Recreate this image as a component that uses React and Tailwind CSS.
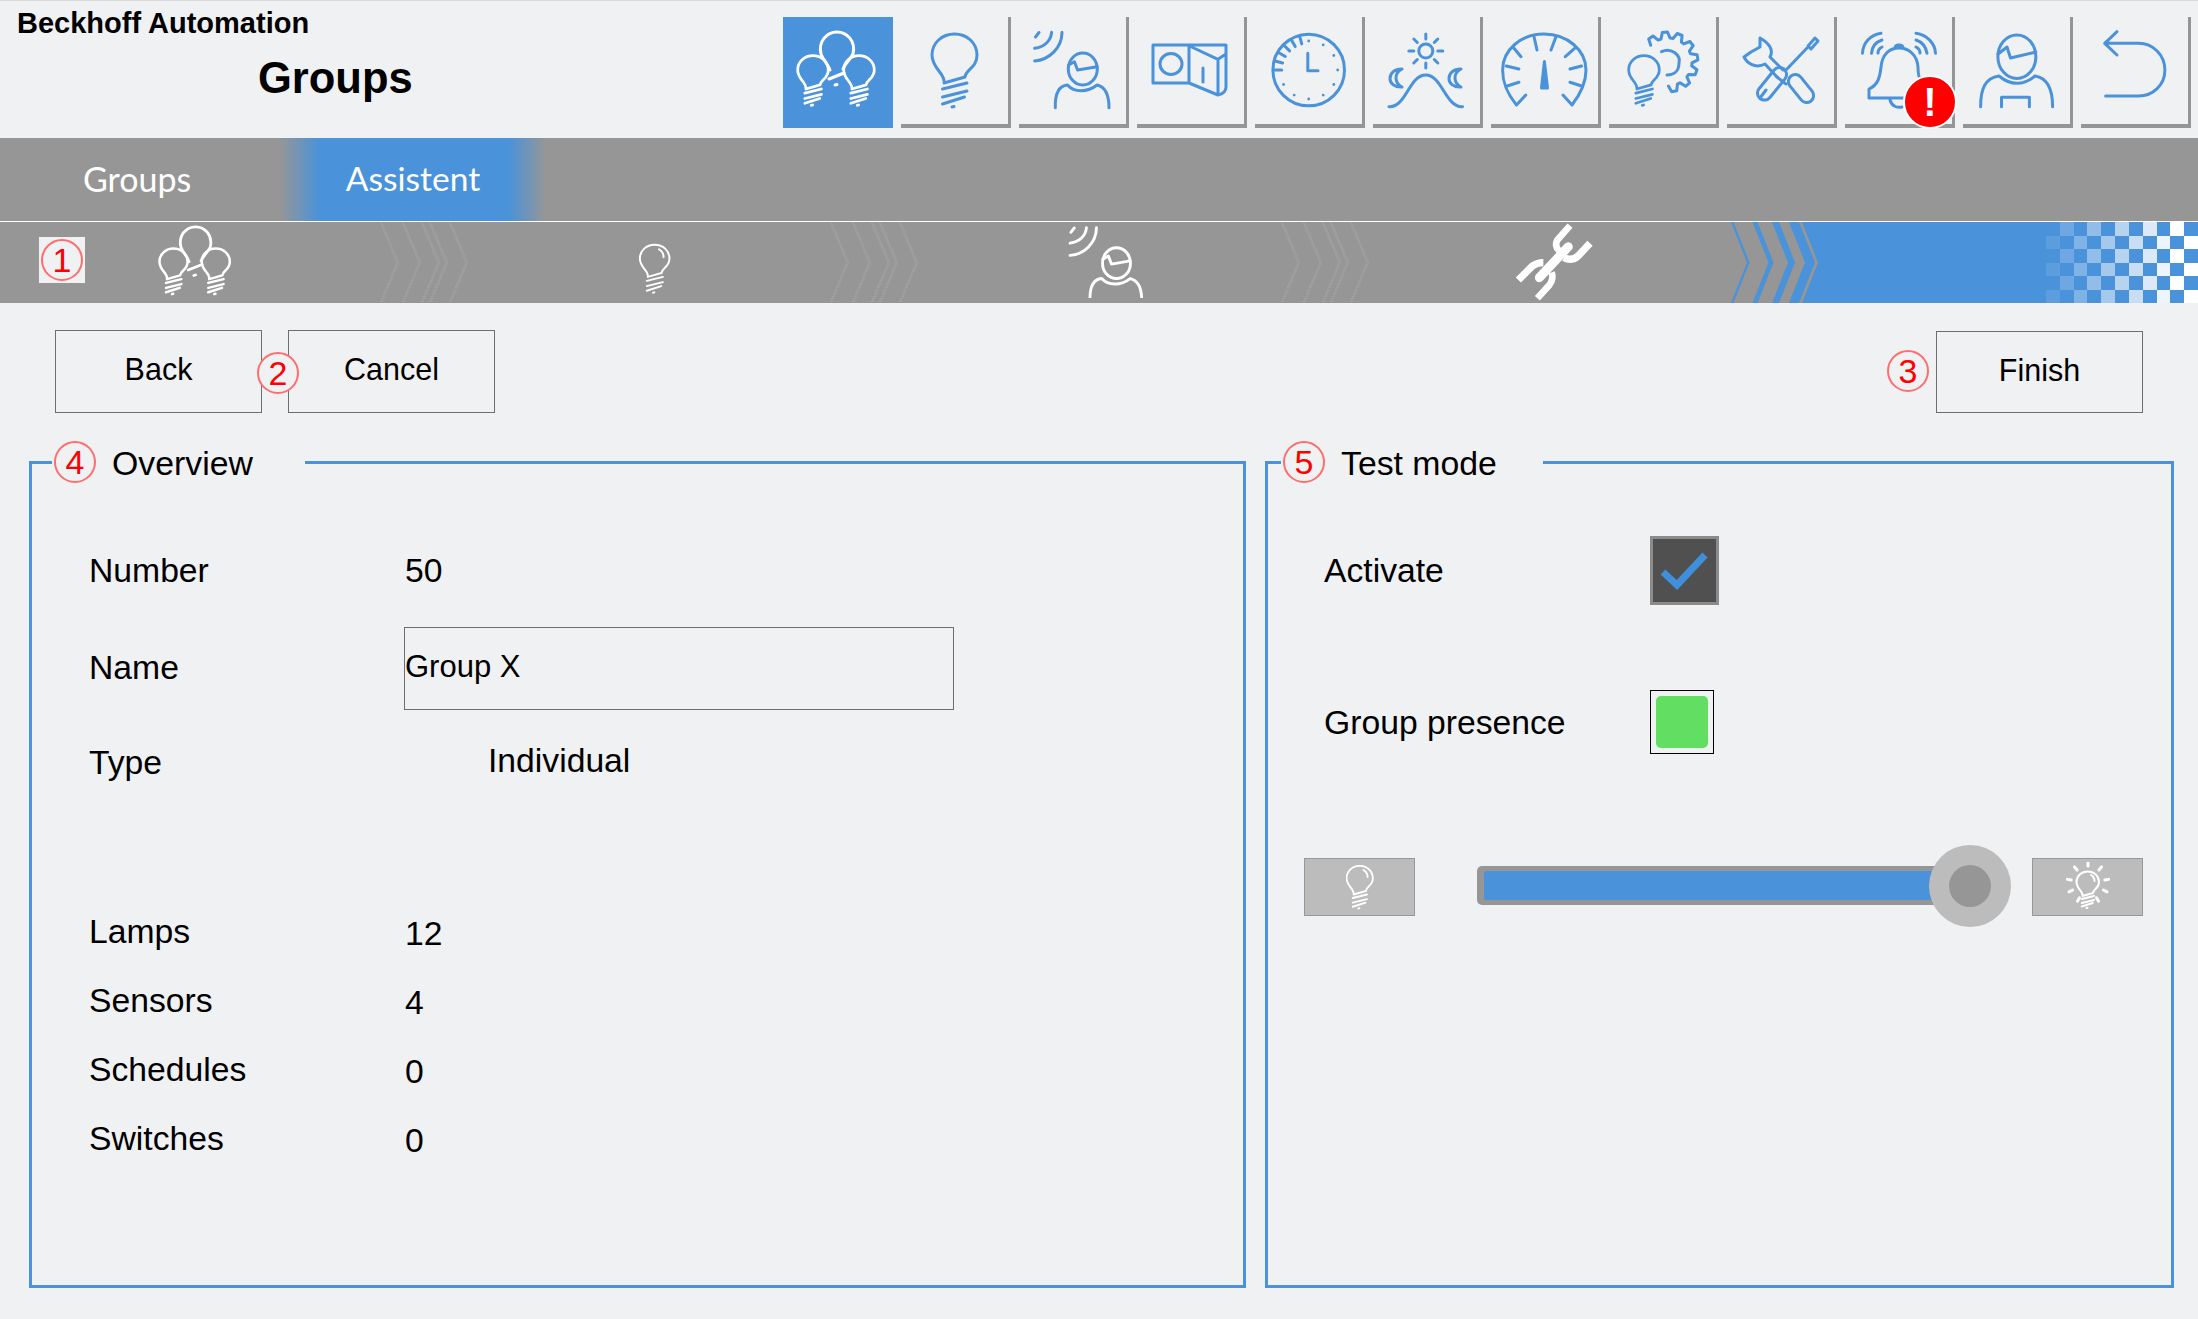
import React from "react";

const polar = (cx, cy, deg, rx, ry = rx) => {
  const a = (deg * Math.PI) / 180;
  return [cx + Math.sin(a) * rx, cy - Math.cos(a) * ry];
};

// ── Bulb drawn in a 48x76 box, scaled by the caller ───────
const Bulb = ({ glare = false }) => (
  <>
    <path d="M13 48C13 40 1 35 1 22 1 10 11 1 23.5 1 36 1 46 10 46 22 46 35 35 36 34 44L13 50" />
    <path d="M11.5 56 36 50M11.5 64 36 58M11.5 71 33.5 64M21 74 23 73.5" />
    {glare && <path d="M30 8C35 11 37 15 37 20" />}
  </>
);

const ToolIcon = ({ children }) => (
  <svg
    width="110"
    height="111"
    viewBox="0 0 110 111"
    fill="none"
    stroke="currentColor"
    strokeWidth="3"
    strokeLinecap="round"
    strokeLinejoin="round"
    className="shrink-0 overflow-visible"
  >
    {children}
  </svg>
);

const GroupBulbs = () => (
  <>
    <path d="M38 37C35 24 44 15 54 15 64 15 73 24 70 37M38 37C40 43 45 47 47 53M70 37C67 43 62 47 60 52M46 62 61 56M52 68 54 67.500" />
    <g transform="translate(14 38) scale(.68)" strokeWidth="4">
      <Bulb />
    </g>
    <g transform="translate(60 38) scale(.68)" strokeWidth="4">
      <Bulb />
    </g>
  </>
);

const SensorPerson = () => (
  <>
    <path d="M20 15.500 16.500 20M32.600 15.300C32 23 26 30 15.600 31.300M43 15.300C43 31 30 43 15.600 44" />
    <ellipse cx="63.800" cy="52" rx="14.500" ry="16" />
    <path d="M49.600 48 55.400 44.700 58.600 53 78 49.700" />
    <path d="M36.300 90.700C36 80 38 69 48.400 68 52 72 57 73.700 62 73.700 68 73.700 73 72 78 68 87 70 90 80 90 90.700" />
  </>
);

const Projector = () => (
  <>
    <path d="M16 28H89V70C89 74 86 77 81 78L52 66H16ZM52 28V66M54.600 30 81 42.300 89 37M81 42.300V78M66 51V65" />
    <ellipse cx="34" cy="47" rx="11" ry="10.500" />
  </>
);

const Clock = () => (
  <>
    <circle cx="53.700" cy="53" r="35.800" />
    <path d="M52.800 36.300V53.700H63" />
    {[0, 30, 60, 90, 120, 150, 180, 210, 240].map((d) => {
      const [x, y] = polar(53.7, 53, d, 29);
      return <circle key={d} cx={x} cy={y} r="1.400" fill="currentColor" stroke="none" />;
    })}
    {[270, 285, 300, 315, 330, 345].map((d) => {
      const [x1, y1] = polar(53.7, 53, d, 27);
      const [x2, y2] = polar(53.7, 53, d, 34);
      return <line key={d} x1={x1} y1={y1} x2={x2} y2={y2} />;
    })}
  </>
);

const Moon = ({ cx, cy }) => (
  <path
    d={`M${cx + 6} ${cy - 9}C${cx - 10} ${cy - 9} ${cx - 10} ${cy + 10} ${cx + 6} ${cy + 9}C${cx - 2} ${cy + 5} ${cx - 2} ${cy - 5} ${cx + 6} ${cy - 9}Z`}
  />
);

const DayCurve = () => (
  <>
    <ellipse cx="52.800" cy="34" rx="7" ry="7" />
    {[0, 45, 90, 135, 180, 225, 270, 315].map((d) => {
      const [x1, y1] = polar(52.8, 34, d, 12);
      const [x2, y2] = polar(52.8, 34, d, 17);
      return <line key={d} x1={x1} y1={y1} x2={x2} y2={y2} />;
    })}
    <path d="M16 89.700C33 91 36 58 52.800 58 69 58 73 91 89.500 89.700" />
    <Moon cx={23} cy={61} />
    <Moon cx={82} cy={61} />
  </>
);

const Gauge = () => (
  <>
    <path d="M25.500 88C15 75 11.600 65 11.600 53 11.600 33 30 17 53 17 76 17 95 33 95 53 95 65 91 75 81 88L72 78M25.500 88 34.800 78" />
    <path d="M43 19.700 46 33M65 19.700 60 33M22 30 30 39.700M74.300 39.700 83.600 31.300M15.300 49 27.900 52M79 52 90.500 49M16.200 69 27.900 65.300M79 65.300 90.500 69" />
    <path d="M53.400 44.600 50.500 71H56.500Z" fill="currentColor" />
  </>
);

const gearPath = () => {
  const pts = [];
  for (let k = 0; k < 8; k++) {
    const a = -46 + k * 29;
    pts.push(polar(59, 45, a, 24), polar(59, 45, a + 6, 30), polar(59, 45, a + 16, 30), polar(59, 45, a + 22, 24));
  }
  return "M" + pts.map((p) => p.map((n) => n.toFixed(1)).join(" ")).join("L");
};

const GearBulb = () => (
  <>
    <path d={gearPath()} />
    <path d="M52.500 34.700C62 30 72 38 70 46 70 54 65 58 58 58" />
    <g transform="translate(19 38) scale(.68)" strokeWidth="4">
      <Bulb />
    </g>
  </>
);

const Tools = () => (
  <>
    <path d="M33 21V30L24 35 17 40C20 46 28 52 38 47L50 60M33 21C42 26 47 33 43 40L56 53" />
    <rect x="-7" y="0" width="14" height="32" rx="7" transform="translate(64 59) rotate(-38.700)" />
    <path d="M80 31 60 52M81 29 88 21 91 24 84 32Z" />
    <rect x="-7" y="0" width="14" height="38" rx="7" transform="translate(57 52) rotate(39)" />
    <path d="M50 60 59 67M33 81 39 73" />
  </>
);

const Bell = () => (
  <>
    <path d="M24 81V72C33 68 35 60 36 50 37 38 44 31 54 31 64 31 72 38 73 50 73 60 75 68 84 72V81ZM50 31C50 27 58 27 58 31M45 83C47 90 53 91 57 90" />
    <path d="M36 16.300C25 18 18 26 17.500 36.300M37 23C31 25 27 30 26.500 36.300M37 30C35 31 33 33 33 36M71 16.300C82 18 90 26 90.500 36.300M71 23C77 25 81 30 82 36.300M71 30C73 31 75 33 75 36" />
  </>
);

const Operator = () => (
  <>
    <ellipse cx="53.900" cy="39.700" rx="19" ry="21.700" />
    <path d="M35 37 44 30 47.500 41 72.800 35" />
    <path d="M17.600 89.700C17.600 72 22 61 36 59 42 64 47 66.300 54 66.300 61 66.300 66 64 72 59 85 61 89.600 72 89.600 89.700M38.500 89.700V80.300H66.400V89.700" />
  </>
);

const BackArrow = () => (
  <path d="M36 14.700 23.700 26.300 36 38M23.700 26.300H57.500C72 26.300 83.900 38 83.900 53 83.900 68 72 79 57.500 79H24.600" />
);

// ── Toolbar button ────────────────────────────────────────
const tools = [GroupBulbs, Bulb1, SensorPerson, Projector, Clock, DayCurve, Gauge, GearBulb, Tools, Bell, Operator, BackArrow];

function Bulb1() {
  return (
    <g transform="translate(30 16)">
      <Bulb />
    </g>
  );
}

const Marker = ({ n, className = "" }) => (
  <div
    className={`flex h-[42px] w-[42px] shrink-0 items-center justify-center rounded-full border-2 border-[#ff6e6e] bg-[#f0f1f3] text-[34px] leading-none text-[#ff0000] ${className}`}
  >
    {n}
  </div>
);

// ── Step strip decorations ────────────────────────────────
const Chevrons = () => (
  <svg width="90" height="81" viewBox="0 0 90 81" fill="none" stroke="#b4b4b4" strokeWidth=".6" strokeDasharray="1.5 1" className="shrink-0">
    {[0, 22, 41, 49, 69].map((x) => (
      <g key={x}>
        <path d={`M${x} 0 ${x + 17} 40.500 ${x} 81`} />
        <path d={`M${x + 1.5} 0 ${x + 18.5} 40.500 ${x + 1.5} 81`} />
      </g>
    ))}
  </svg>
);

const BlueChevrons = () => {
  const band = (a, b) => `${a},0 ${b},0 ${b + 16},40.500 ${b},81 ${a},81 ${a + 16},40.500`;
  return (
    <svg width="89" height="81" viewBox="0 0 89 81" fill="#4a92da" className="shrink-0">
      <polygon points={band(0, 2.5)} />
      <polygon points={band(21.5, 26.5)} />
      <polygon points={band(41, 48)} />
      <polygon points={band(58, 68)} />
      <polygon points="71,0 89,0 89,81 71,81 87,40.500" />
    </svg>
  );
};

const Checker = () => (
  <div className="grid h-[81px] w-[152px] shrink-0 grid-cols-11 grid-rows-6 bg-[#4a92da]">
    {Array.from({ length: 66 }).map((_, i) => {
      const col = i % 11;
      const row = Math.floor(i / 11);
      const lit = row % 2 === 0 ? col % 2 === 1 : col % 2 === 0;
      return <div key={i} style={{ background: lit ? `rgba(255,255,255,${Math.min(1, (col + 1) / 10)})` : "transparent" }} />;
    })}
  </div>
);

const BrokenLink = () => (
  <svg width="110" height="81" viewBox="0 21 330 243" fill="none" stroke="#fff" className="shrink-0">
    <path d="M210 32 172 75Q162 92 178 108" strokeWidth="20" />
    <path d="M270 85 235 122Q215 140 192 128" strokeWidth="22" />
    <path d="M55 195 95 155Q110 143 130 143" strokeWidth="22" />
    <path d="M112 250 148 210Q162 192 155 172" strokeWidth="20" />
    <path d="M118 188 205 95" strokeWidth="27" strokeLinecap="round" />
  </svg>
);

// ── Test mode slider ──────────────────────────────────────
const SliderButton = ({ children }) => (
  <div className="flex h-[58px] w-[111px] shrink-0 items-center justify-center border border-[#989898] bg-[#bcbcbc]">
    {children}
  </div>
);

const rays = [-150, -115, -80, -40, 0, 40, 80, 115, 150];

const Field = ({ label, value }) => (
  <div className="flex h-[69px] items-center">
    <div className="w-[316px]">{label}</div>
    <div className="pt-[4px]">{value}</div>
  </div>
);

export default function App() {
  return (
    <div className="h-[1319px] w-[2198px] overflow-hidden border-t border-[#d9dadc] bg-[#f0f1f3] font-['Liberation_Sans',Arial,sans-serif] text-black">
      {/* Header */}
      <div className="flex h-[137px]">
        <div className="w-[783px] shrink-0 pl-[17px]">
          <div className="mt-[5px] text-[29px] leading-[34px] font-bold">Beckhoff Automation</div>
          <div className="mt-[13px] pl-[241px] text-[43.5px] leading-[50px] font-bold">Groups</div>
        </div>
        <div className="flex gap-2 pt-4 text-[#4a92da]">
          {tools.map((Icon, i) => (
            <div
              key={i}
              className={
                i === 0
                  ? "h-[111px] w-[110px] bg-[#4a92da] text-white"
                  : "relative h-[111px] w-[110px] border-r-[3px] border-b-4 border-[#959595]"
              }
            >
              <ToolIcon>
                <Icon />
              </ToolIcon>
              {i === 9 && (
                <div className="absolute top-[58px] left-[58px] z-10 flex h-[54px] w-[54px] items-center justify-center rounded-full border-2 border-white bg-[#ff0000] text-[40px] leading-none font-bold text-white">
                  !
                </div>
              )}
            </div>
          ))}
        </div>
      </div>

      {/* Tabs */}
      <div className="flex h-[83px] items-stretch bg-[#969696] pb-[3px] font-['Lato',sans-serif] text-white">
        <div className="flex w-[280px] items-center pl-[83px] text-[34px]">Groups</div>
        <div className="-mb-[3px] flex w-[266px] items-center justify-center bg-[linear-gradient(90deg,#969696_0%,#4a92da_15%,#4a92da_86%,#969696_100%)] pb-[3px] text-[33.5px]">
          Assistent
        </div>
      </div>

      {/* Wizard steps */}
      <div className="flex h-[82px] items-stretch border-t border-white bg-[#969696] text-white">
        <div className="flex w-[380px] items-center pl-[39px]">
          <div className="mb-[5px] flex h-[46px] w-[46px] items-center justify-center bg-[#f0f1f3]">
            <Marker n="1" />
          </div>
          <svg width="101" height="102" viewBox="0 0 110 111" fill="none" stroke="#fff" strokeWidth="3" strokeLinecap="round" strokeLinejoin="round" className="mt-[3px] ml-[61px] shrink-0 overflow-visible">
            <GroupBulbs />
          </svg>
        </div>
        <Chevrons />
        <div className="flex w-[360px] items-center pl-[169px]">
          <svg width="32" height="50" viewBox="0 0 48 76" fill="none" stroke="#fff" strokeWidth="3" strokeLinecap="round" className="mt-[12px] overflow-visible">
            <Bulb glare />
          </svg>
        </div>
        <Chevrons />
        <div className="flex h-[76px] w-[361px] items-center overflow-hidden pl-[135px]">
          <svg width="106" height="107" viewBox="0 0 110 111" fill="none" stroke="#fff" strokeWidth="3" strokeLinecap="round" strokeLinejoin="round" className="mt-[12px] shrink-0">
            <SensorPerson />
          </svg>
        </div>
        <Chevrons />
        <div className="flex w-[360px] items-center pl-[129px]">
          <BrokenLink />
        </div>
        <BlueChevrons />
        <div className="flex-1 bg-[#4a92da]" />
        <Checker />
      </div>

      {/* Wizard buttons */}
      <div className="flex items-start justify-between pt-[27px] pr-[55px] pl-[55px] text-[30.5px]">
        <div className="relative flex gap-[26px]">
          <button className="h-[83px] w-[207px] border border-[#6e6e6e] pb-[3px]">Back</button>
          <button className="h-[83px] w-[207px] border border-[#6e6e6e] pb-[3px]">Cancel</button>
          <Marker n="2" className="absolute top-[22px] left-[202px]" />
        </div>
        <div className="flex items-center gap-[7px] pt-px">
          <Marker n="3" className="mb-[2px]" />
          <button className="h-[82px] w-[207px] border border-[#6e6e6e] pb-[3px]">Finish</button>
        </div>
      </div>

      <div className="flex gap-[19px] pt-[48px] pl-[29px] text-[33.7px]">
        {/* Overview */}
        <div className="relative h-[827px] w-[1217px] border-[3px] border-[#4a92da] pt-[76px] pl-[57px]">
          <div className="absolute -top-[23px] left-[20px] flex h-[42px] w-[253px] items-center gap-[16px] bg-[#f0f1f3] pl-[2px]">
            <Marker n="4" />
            <span className="pt-[2px] text-[33.8px]">Overview</span>
          </div>

          <div className="flex h-[60px] items-center">
            <div className="w-[316px]">Number</div>
            <div>50</div>
          </div>
          <div className="mt-[27px] flex h-[83px] items-center">
            <div className="w-[315px] pb-[2px]">Name</div>
            <input
              readOnly
              defaultValue="Group X"
              className="h-[83px] w-[550px] border border-[#6e6e6e] bg-transparent pb-[3px] text-[31px] outline-none"
            />
          </div>
          <div className="mt-[22px] flex h-[60px] items-center">
            <div className="w-[399px]">Type</div>
            <div className="pb-1">Individual</div>
          </div>
          <div className="mt-[105px]">
            <Field label="Lamps" value="12" />
            <Field label="Sensors" value="4" />
            <Field label="Schedules" value="0" />
            <Field label="Switches" value="0" />
          </div>
        </div>

        {/* Test mode */}
        <div className="relative h-[827px] w-[909px] border-[3px] border-[#4a92da] pt-[72px]">
          <div className="absolute -top-[23px] left-[13px] flex h-[42px] w-[262px] items-center gap-[16px] bg-[#f0f1f3] pl-[2px]">
            <Marker n="5" />
            <span className="pt-[2px] text-[33.8px]">Test mode</span>
          </div>

          <div className="flex h-[69px] items-center pl-[56px]">
            <div className="w-[326px]">Activate</div>
            <div className="h-[69px] w-[69px] border-[3px] border-[#8b8b8b] bg-[#505050]">
              <svg width="63" height="63" viewBox="3 3 63 63" fill="none" stroke="#3f8fdb" strokeWidth="7">
                <path d="M13 36 27 49 55 19" />
              </svg>
            </div>
          </div>

          <div className="mt-[85px] flex h-[64px] items-center pl-[56px]">
            <div className="w-[326px]">Group presence</div>
            <div className="flex h-[64px] w-[64px] items-center justify-center border border-black">
              <div className="h-[52px] w-[52px] rounded-[5px] bg-[#62de62]" />
            </div>
          </div>

          <div className="mt-[104px] flex items-center pl-[36px]">
            <SliderButton>
              <svg width="28" height="45" viewBox="0 0 48 76" fill="none" stroke="#fff" strokeWidth="3.200" strokeLinecap="round">
                <Bulb glare />
              </svg>
            </SliderButton>
            <div className="relative mb-[3px] ml-[62px] h-[39px] w-[493px] rounded-[5px] bg-[#969696] py-[5px] pl-[7px]">
              <div className="h-full rounded-[2px] bg-[#4a92da]" />
              <div className="absolute top-[-21px] right-[-41px] flex h-[82px] w-[82px] items-center justify-center rounded-full bg-[#bcbcbc]">
                <div className="h-[42px] w-[42px] rounded-full bg-[#969696]" />
              </div>
            </div>
            <div className="ml-[62px]">
              <SliderButton>
                <svg width="44" height="50" viewBox="0 0 44 50" fill="none" stroke="#fff" strokeLinecap="round">
                  <g transform="translate(10 9) scale(.5)" strokeWidth="4">
                    <Bulb glare />
                  </g>
                  {rays.map((d) => {
                    const [x1, y1] = polar(22, 21, d, 17);
                    const [x2, y2] = polar(22, 21, d, 21);
                    return <line key={d} x1={x1} y1={y1} x2={x2} y2={y2} strokeWidth="3" />;
                  })}
                </svg>
              </SliderButton>
            </div>
          </div>
        </div>
      </div>
    </div>
  );
}
